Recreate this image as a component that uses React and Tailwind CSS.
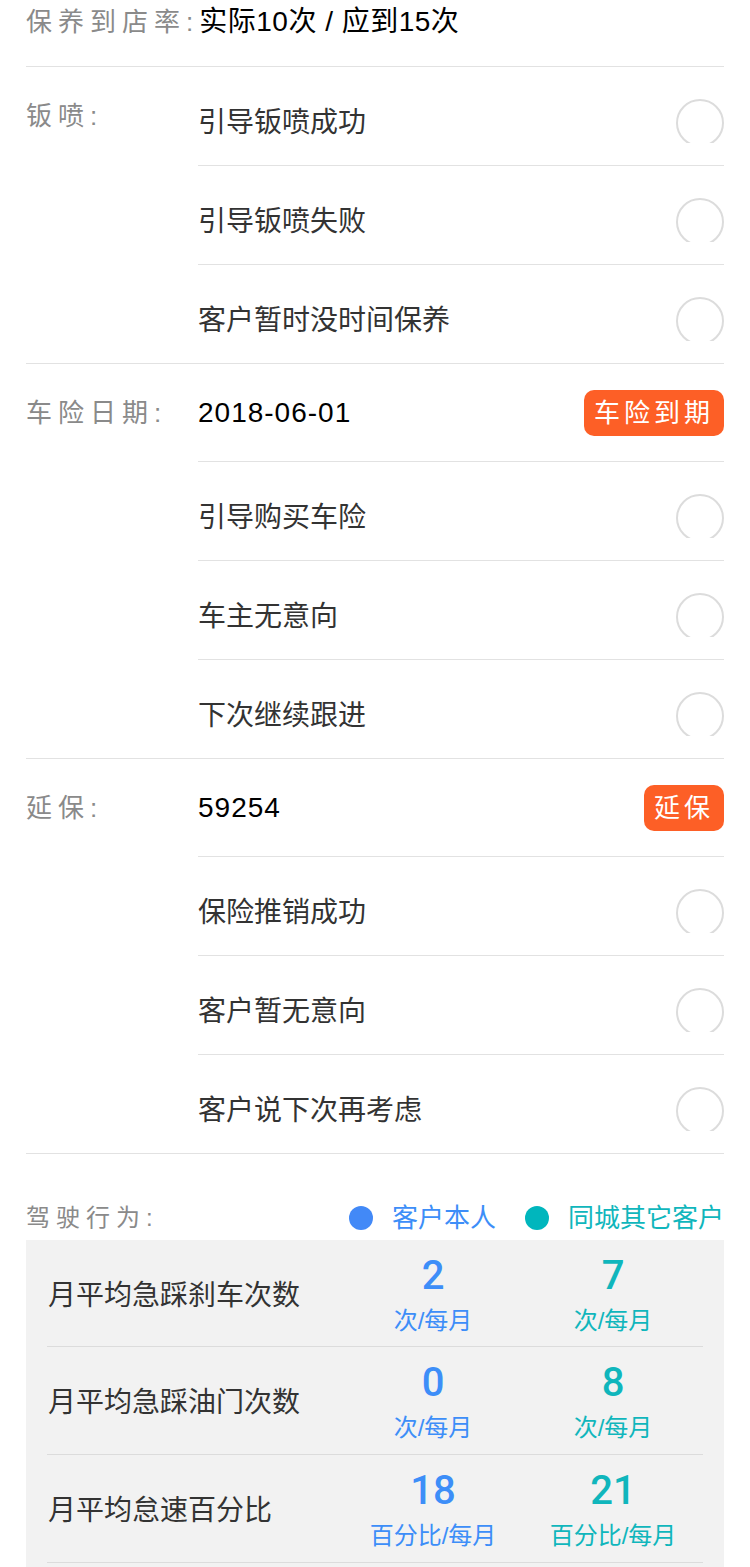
import React from "react";

const FONT = { fontFamily: '"Liberation Sans", "Noto Sans CJK SC", sans-serif' };
const NUM = { fontFamily: 'Roboto, "Liberation Sans", sans-serif' };

const sections = [
  {
    label: "钣喷:",
    options: ["引导钣喷成功", "引导钣喷失败", "客户暂时没时间保养"],
  },
  {
    label: "车险日期:",
    value: "2018-06-01",
    badge: "车险到期",
    options: ["引导购买车险", "车主无意向", "下次继续跟进"],
  },
  {
    label: "延保:",
    value: "59254",
    badge: "延保",
    options: ["保险推销成功", "客户暂无意向", "客户说下次再考虑"],
  },
];

const driving = [
  { name: "月平均急踩刹车次数", mine: 2, city: 7, unit: "次/每月" },
  { name: "月平均急踩油门次数", mine: 0, city: 8, unit: "次/每月" },
  { name: "月平均怠速百分比", mine: 18, city: 21, unit: "百分比/每月" },
];

function Radio() {
  return (
    <div className="h-[44px] w-[48px] overflow-hidden">
      <div className="h-[48px] w-[48px] rounded-full border-2 border-[#dcdcdc]" />
    </div>
  );
}

function Section({ s }) {
  return (
    <div className="flex border-b border-[#e2e2e2]">
      <div className="w-[172px] shrink-0 pt-[31px] text-[26px] leading-[36px] tracking-[6px] text-[#8a8a8a]">
        {s.label}
      </div>
      <div className="flex-1">
        {s.value && (
          <div className="flex h-[98px] items-center justify-between border-b border-[#e2e2e2]">
            <span className="text-[28px] tracking-[1px] text-black">{s.value}</span>
            <span className="rounded-[10px] bg-[#fd5f26] px-[10px] text-[26px] leading-[46px] tracking-[4px] text-white">
              {s.badge}
            </span>
          </div>
        )}
        {s.options.map((o, i) => {
          const last = i === s.options.length - 1;
          return (
            <div
              key={o}
              className={`flex items-center justify-between pt-[10px] ${
                last ? "h-[98px]" : "h-[99px] border-b border-[#e2e2e2]"
              }`}
            >
              <span className="pt-[3px] text-[28px] leading-[36px] text-[#333]">{o}</span>
              <Radio />
            </div>
          );
        })}
      </div>
    </div>
  );
}

export default function App() {
  return (
    <div className="w-[750px] bg-white px-[26px]" style={FONT}>
      <div className="h-[67px] border-b border-[#e2e2e2] pt-[4px]">
        <div className="flex items-center leading-[36px]">
          <span className="text-[26px] tracking-[6px] text-[#8a8a8a]">保养到店率:</span>
          <span className="text-[28px] tracking-[0.5px] text-black">实际10次 / 应到15次</span>
        </div>
      </div>

      {sections.map((s) => (
        <Section key={s.label} s={s} />
      ))}

      <div className="flex h-[86px] items-start justify-between pt-[46px]">
        <span className="text-[24px] leading-[36px] tracking-[6px] text-[#8a8a8a]">驾驶行为:</span>
        <div className="flex items-center text-[26px] leading-[36px]">
          <span className="h-[24px] w-[24px] rounded-full bg-[#4289f7]" />
          <span className="ml-[19px] text-[#3d8ef8]">客户本人</span>
          <span className="ml-[29px] h-[24px] w-[24px] rounded-full bg-[#00b6bd]" />
          <span className="ml-[19px] text-[#10b6bc]">同城其它客户</span>
        </div>
      </div>

      <div className="bg-[#f2f2f2] px-[21px] pb-[5px]">
        {driving.map((d, i) => (
          <div
            key={d.name}
            className={`flex items-center border-b border-[#dcdcdc] ${i === 0 ? "h-[107px]" : "h-[108px]"}`}
          >
            <div className="flex-1 pl-[1px] pt-[5px] text-[28px] text-[#333]">{d.name}</div>
            <div className="flex w-[180px] flex-col items-center pt-[5px] text-[#3d8ef8]">
              <span className="text-[40px] font-medium leading-[46px]" style={NUM}>{d.mine}</span>
              <span className="pt-[4px] text-[24px] leading-[36px]">{d.unit}</span>
            </div>
            <div className="flex w-[180px] flex-col items-center pt-[5px] text-[#10b6bc]">
              <span className="text-[40px] font-medium leading-[46px]" style={NUM}>{d.city}</span>
              <span className="pt-[4px] text-[24px] leading-[36px]">{d.unit}</span>
            </div>
          </div>
        ))}
      </div>
    </div>
  );
}
